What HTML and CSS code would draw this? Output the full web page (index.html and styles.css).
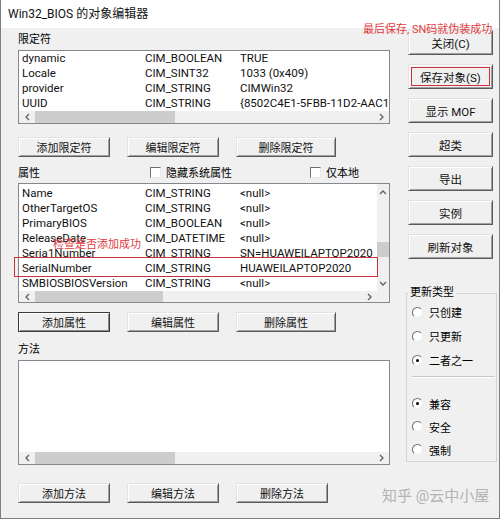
FILE: index.html
```html
<!DOCTYPE html>
<html lang="zh-CN">
<head>
    <meta charset="UTF-8">
    <meta name="viewport" content="width=device-width, initial-scale=1.0">
    <title>Win32_BIOS 的对象编辑器</title>
    <link rel="stylesheet" href="styles.css">
</head>
<body>

<div class="window">
    <div class="titlebar">Win32_BIOS 的对象编辑器</div>

    <div class="main">
        <div class="left">
            <div class="label qual-label">限定符</div>
            <div class="listbox qual">
                <div class="rows">
                    <div class="row"><span>dynamic</span><span>CIM_BOOLEAN</span><span>TRUE</span></div>
                    <div class="row"><span>Locale</span><span>CIM_SINT32</span><span>1033 (0x409)</span></div>
                    <div class="row"><span>provider</span><span>CIM_STRING</span><span>CIMWin32</span></div>
                    <div class="row"><span>UUID</span><span>CIM_STRING</span><span>{8502C4E1-5FBB-11D2-AAC1-006008C78BC7}</span></div>
                </div>
                <div class="hscroll">
                    <span class="arrow"><svg width="5" height="8" viewBox="0 0 5 8"><path d="M4 1 L1 4 L4 7" /></svg></span>
                    <span class="thumb"></span>
                    <span class="track"></span>
                    <span class="arrow"><svg width="5" height="8" viewBox="0 0 5 8"><path d="M1 1 L4 4 L1 7" /></svg></span>
                </div>
            </div>
            <div class="btnrow top-row">
                <button class="btn">添加限定符</button>
                <button class="btn">编辑限定符</button>
                <button class="btn wide">删除限定符</button>
            </div>

            <div class="prop-head">
                <span class="head-text">属性</span>
                <span class="check hide-sys"><span class="box"></span>隐藏系统属性</span>
                <span class="check"><span class="box"></span>仅本地</span>
            </div>
            <div class="listbox props">
                <div class="lb-body">
                    <div class="rows">
                        <div class="row"><span>Name</span><span>CIM_STRING</span><span>&lt;null&gt;</span></div>
                        <div class="row"><span>OtherTargetOS</span><span>CIM_STRING</span><span>&lt;null&gt;</span></div>
                        <div class="row"><span>PrimaryBIOS</span><span>CIM_BOOLEAN</span><span>&lt;null&gt;</span></div>
                        <div class="row"><span>ReleaseDate</span><span>CIM_DATETIME</span><span>&lt;null&gt;</span></div>
                        <div class="row"><span>Seria1Number</span><span>CIM_STRING</span><span>SN=HUAWEILAPTOP2020</span></div>
                        <div class="row"><span>SerialNumber</span><span>CIM_STRING</span><span>HUAWEILAPTOP2020</span></div>
                        <div class="row"><span>SMBIOSBIOSVersion</span><span>CIM_STRING</span><span>&lt;null&gt;</span></div>
                    </div>
                    <div class="vscroll">
                        <span class="varrow"><svg width="8" height="5" viewBox="0 0 8 5"><path d="M1 4 L4 1 L7 4" /></svg></span>
                        <span class="vtrack"><span class="vthumb"></span></span>
                        <span class="varrow"><svg width="8" height="5" viewBox="0 0 8 5"><path d="M1 1 L4 4 L7 1" /></svg></span>
                    </div>
                </div>
                <div class="lb-bottom">
                    <div class="hscroll">
                        <span class="arrow"><svg width="5" height="8" viewBox="0 0 5 8"><path d="M4 1 L1 4 L4 7" /></svg></span>
                        <span class="thumb"></span>
                        <span class="track"></span>
                        <span class="arrow"><svg width="5" height="8" viewBox="0 0 5 8"><path d="M1 1 L4 4 L1 7" /></svg></span>
                    </div>
                    <span class="corner"></span>
                </div>
            </div>
            <div class="btnrow mid-row">
                <button class="btn default">添加属性</button>
                <button class="btn">编辑属性</button>
                <button class="btn wide">删除属性</button>
            </div>

            <div class="label method-label">方法</div>
            <div class="listbox methods">
                <div class="rows"></div>
                <div class="hscroll">
                    <span class="arrow"><svg width="5" height="8" viewBox="0 0 5 8"><path d="M4 1 L1 4 L4 7" /></svg></span>
                    <span class="thumb"></span>
                    <span class="track"></span>
                    <span class="arrow"><svg width="5" height="8" viewBox="0 0 5 8"><path d="M1 1 L4 4 L1 7" /></svg></span>
                </div>
            </div>
            <div class="btnrow bottom-row">
                <button class="btn">添加方法</button>
                <button class="btn">编辑方法</button>
                <button class="btn">删除方法</button>
            </div>
        </div>

        <div class="right">
            <button class="btn side">关闭(C)</button>
            <button class="btn side marked">保存对象(S)</button>
            <button class="btn side">显示 MOF</button>
            <button class="btn side">超类</button>
            <button class="btn side">导出</button>
            <button class="btn side">实例</button>
            <button class="btn side">刷新对象</button>

            <fieldset class="group">
                <legend>更新类型</legend>
                <div class="radio-row"><span class="radio"></span>只创建</div>
                <div class="radio-row"><span class="radio"></span>只更新</div>
                <div class="radio-row"><span class="radio on"></span>二者之一</div>
                <div class="sep"></div>
                <div class="radio-row small"><span class="radio on"></span>兼容</div>
                <div class="radio-row small"><span class="radio"></span>安全</div>
                <div class="radio-row small"><span class="radio"></span>强制</div>
            </fieldset>
        </div>
    </div>

    <!-- annotations drawn over the screenshot -->
    <div class="note note-top">最后保存, SN码就伪装成功</div>
    <div class="note note-check">检查是否添加成功</div>
    <div class="mark-row"></div>
    <div class="watermark">知乎 @云中小屋</div>
</div>

</body>
</html>
```

FILE: styles.css
```css
* {
    margin: 0;
    padding: 0;
    box-sizing: border-box;
}
body {
    background: #fff;
    font-family: Roboto, "Noto Sans CJK SC", sans-serif;
    color: #000;
}
.window {
    position: relative;
    width: 500px;
    height: 519px;
    background: #f0f0f0;
    border: 1px solid #7f7f7f;
    border-top: none;
    overflow: hidden;
}
.titlebar {
    height: 28px;
    line-height: 28px;
    padding-left: 7px;
    background: #fff;
    font-size: 12px;
    color: #111;
}
.main {
    display: flex;
    padding-left: 17px;
}
.left {
    width: 372px;
}
.right {
    width: 89px;
    margin-left: 18px;
    padding-top: 2px;
    display: flex;
    flex-direction: column;
    gap: 9px;
}

/* labels */
.label {
    font-size: 11px;
    line-height: 14px;
    height: 14px;
}
.qual-label {
    margin-top: 5px;
}
.method-label {
    margin-top: 11px;
}

/* list boxes */
.listbox {
    background: #fff;
    border: 1px solid #828790;
    overflow: hidden;
    display: flex;
    flex-direction: column;
}
.qual {
    margin-top: 3px;
    height: 74px;
}
.props {
    margin-top: 4px;
    height: 120px;
}
.methods {
    margin-top: 3px;
    height: 105px;
}
.rows {
    flex: 1;
    overflow: hidden;
}
.row {
    display: flex;
    height: 15px;
    line-height: 15px;
    padding-left: 3px;
    font-size: 11.5px;
    white-space: nowrap;
    color: #111;
}
.row span {
    flex: none;
}
.row span:nth-child(1) {
    width: 123px;
}
.row span:nth-child(2) {
    width: 95px;
}

/* scroll bars */
.hscroll {
    flex: none;
    display: flex;
    height: 12px;
    background: #f0f0f0;
}
.lb-bottom .hscroll {
    flex: 1;
}
.arrow {
    flex: none;
    width: 16px;
    display: flex;
    align-items: center;
    justify-content: center;
}
.arrow path, .varrow path {
    fill: none;
    stroke: #606060;
    stroke-width: 1.3;
}
.thumb {
    flex: none;
    width: 140px;
    background: #cdcdcd;
}
.props .thumb {
    width: 128px;
}
.track {
    flex: 1;
}
.lb-body {
    display: flex;
    height: 107px;
}
.lb-body .rows {
    padding-top: 2px;
}
.vscroll {
    flex: none;
    width: 12px;
    display: flex;
    flex-direction: column;
    background: #f0f0f0;
}
.varrow {
    height: 16px;
    display: flex;
    align-items: center;
    justify-content: center;
}
.vtrack {
    flex: 1;
    padding-top: 42px;
}
.vthumb {
    display: block;
    height: 15px;
    background: #cdcdcd;
}
.lb-bottom {
    display: flex;
    height: 11px;
}
.corner {
    width: 12px;
    background: #f0f0f0;
}

/* buttons */
.btnrow {
    display: flex;
    gap: 17px;
}
.top-row {
    margin-top: 13px;
}
.mid-row {
    margin-top: 9px;
}
.bottom-row {
    margin-top: 18px;
}
.btn {
    width: 92px;
    height: 20px;
    font-family: Roboto, "Noto Sans CJK SC", sans-serif;
    font-size: 11px;
    color: #111;
    background: #f0f0f0;
    border: 1px solid;
    border-color: #e3e3e3 #5a5a5a #5a5a5a #e3e3e3;
    box-shadow: inset 1px 1px #fff, inset -1px -1px #a0a0a0;
}
.btn.wide {
    width: 100px;
}
.btn.default {
    border-color: #3a3a3a;
    box-shadow: inset 1px 1px #fff, inset -1px -1px #8a8a8a;
}
.btn.side {
    width: 85px;
    height: 25px;
    font-size: 11.5px;
}
.btn.marked {
    outline: 1.5px solid #c8323a;
    outline-offset: -4px;
}

/* property header with check boxes */
.prop-head {
    display: flex;
    align-items: center;
    height: 14px;
    margin-top: 8px;
    font-size: 11px;
}
.head-text {
    width: 132px;
}
.check {
    display: flex;
    align-items: center;
    gap: 5px;
}
.hide-sys {
    width: 160px;
}
.box {
    width: 11px;
    height: 11px;
    background: #fff;
    border: 1px solid;
    border-color: #707070 #e8e8e8 #e8e8e8 #707070;
}

/* update type group */
.group {
    margin-top: 18px;
    margin-left: -2px;
    width: 91px;
    border: 1px solid #d3d3d3;
    padding: 0 0 0 5px;
}
.group legend {
    font-size: 11px;
    line-height: 14px;
    padding: 0 2px;
    margin-left: -4px;
}
.radio-row {
    display: flex;
    align-items: center;
    gap: 6px;
    height: 24px;
    font-size: 11px;
}
.radio-row.small {
    height: 23px;
}
.sep {
    height: 2px;
    margin: 4px 1px 14px 0;
    border-top: 1px solid #c8c8c8;
    border-bottom: 1px solid #fff;
}
.sep + .radio-row {
    margin-top: 0;
}
.radio {
    position: relative;
    width: 11px;
    height: 11px;
    border-radius: 50%;
    background: #fff;
    border: 1px solid;
    border-color: #6e6e6e #ececec #ececec #6e6e6e;
}
.radio.on::after {
    content: "";
    position: absolute;
    left: 3px;
    top: 3px;
    width: 3px;
    height: 3px;
    border-radius: 50%;
    background: #000;
}

/* red notes */
.note {
    position: absolute;
    font-size: 11px;
    line-height: 14px;
    color: #e0393e;
    white-space: nowrap;
}
.note-top {
    left: 362px;
    top: 23px;
}
.note-check {
    left: 52px;
    top: 238px;
}
.mark-row {
    position: absolute;
    left: 13px;
    top: 257px;
    width: 364px;
    height: 20px;
    border: 1.5px solid #c8323a;
}
.watermark {
    position: absolute;
    left: 381px;
    top: 487px;
    font-size: 15px;
    line-height: 18px;
    color: #b3b3b3;
    white-space: nowrap;
}
```
